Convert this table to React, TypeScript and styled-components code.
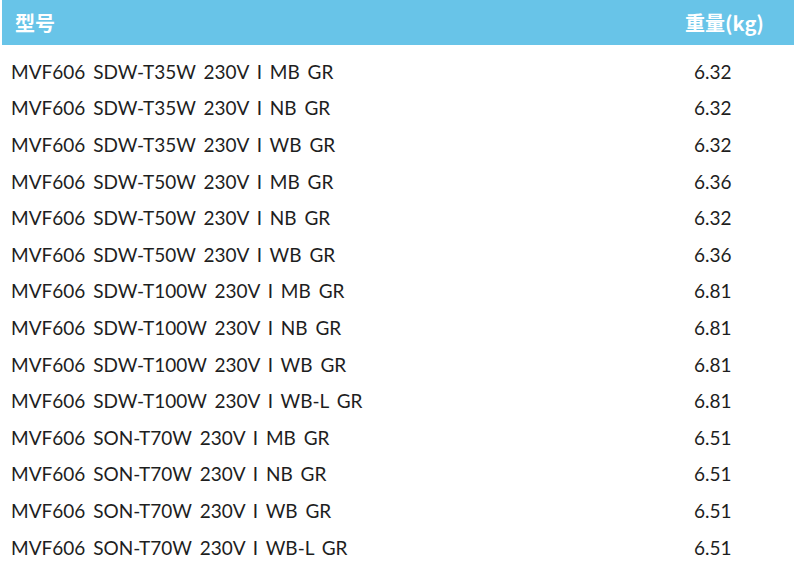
import React from "react";
import styled, { createGlobalStyle } from "styled-components";

const Global = createGlobalStyle`
  html, body { margin: 0; padding: 0; background: #fff; }
  body { font-family: "Lato", "Noto Sans CJK SC", sans-serif; }
`;

const Page = styled.div`
  width: 794px;
  height: 571px;
  overflow: hidden;
  background: #fff;
`;

const Header = styled.div`
  margin-left: 2px;
  height: 45px;
  background: #68c4e8;
  display: grid;
  grid-template-columns: 683px 1fr;
  align-items: center;
  color: #fff;
  font-weight: 700;
  font-size: 20px;
  font-family: "Noto Sans CJK SC", "Lato", sans-serif;
`;

const HeadCell = styled.div<{ $pad: number }>`
  padding-left: ${(p) => p.$pad}px;
  padding-bottom: 1px;
`;

const Body = styled.div`
  padding-top: 8px;
`;

const Row = styled.div`
  height: 36.6px;
  display: grid;
  grid-template-columns: 694px 1fr;
  align-items: center;
  font-size: 19px;
  word-spacing: 3px;
  color: #1e1e1e;
`;

const Cell = styled.div<{ $pad?: number }>`
  padding-left: ${(p) => p.$pad ?? 0}px;
  white-space: nowrap;
`;

const rows: [string, string][] = [
  ["MVF606 SDW-T35W 230V I MB GR", "6.32"],
  ["MVF606 SDW-T35W 230V I NB GR", "6.32"],
  ["MVF606 SDW-T35W 230V I WB GR", "6.32"],
  ["MVF606 SDW-T50W 230V I MB GR", "6.36"],
  ["MVF606 SDW-T50W 230V I NB GR", "6.32"],
  ["MVF606 SDW-T50W 230V I WB GR", "6.36"],
  ["MVF606 SDW-T100W 230V I MB GR", "6.81"],
  ["MVF606 SDW-T100W 230V I NB GR", "6.81"],
  ["MVF606 SDW-T100W 230V I WB GR", "6.81"],
  ["MVF606 SDW-T100W 230V I WB-L GR", "6.81"],
  ["MVF606 SON-T70W 230V I MB GR", "6.51"],
  ["MVF606 SON-T70W 230V I NB GR", "6.51"],
  ["MVF606 SON-T70W 230V I WB GR", "6.51"],
  ["MVF606 SON-T70W 230V I WB-L GR", "6.51"],
];

export default function App() {
  return (
    <Page>
      <Global />
      <Header>
        <HeadCell $pad={13}>型号</HeadCell>
        <HeadCell $pad={0}>重量(kg)</HeadCell>
      </Header>
      <Body>
        {rows.map(([m, w], i) => (
          <Row key={i}>
            <Cell $pad={11}>{m}</Cell>
            <Cell>{w}</Cell>
          </Row>
        ))}
      </Body>
    </Page>
  );
}
